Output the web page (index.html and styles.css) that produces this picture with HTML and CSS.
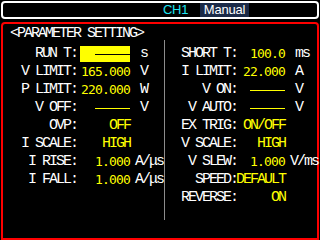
FILE: index.html
```html
<!DOCTYPE html>
<html lang="en">
<head>
  <meta charset="UTF-8" />
  <title>Parameter Setting</title>
  <link rel="stylesheet" href="styles.css">
</head>
<body>

  <div class="topbar">
    <span class="ch">CH1</span>
    <span class="mode">Manual</span>
  </div>

  <div class="panel">
    <div class="title">&lt;PARAMETER SETTING&gt;</div>

    <div class="cols">
      <div class="col left">
        <div class="row">
          <span class="lbl">RUN T:</span>
          <span class="val"><span class="edit"><i class="line"></i></span></span>
          <span class="unit">s</span>
        </div>
        <div class="row">
          <span class="lbl">V LIMIT:</span>
          <span class="val num">165.000</span>
          <span class="unit">V</span>
        </div>
        <div class="row">
          <span class="lbl">P LIMIT:</span>
          <span class="val num">220.000</span>
          <span class="unit">W</span>
        </div>
        <div class="row">
          <span class="lbl">V OFF:</span>
          <span class="val"><i class="dash"></i></span>
          <span class="unit">V</span>
        </div>
        <div class="row">
          <span class="lbl">OVP:</span>
          <span class="val word">OFF</span>
          <span class="unit"></span>
        </div>
        <div class="row">
          <span class="lbl">I SCALE:</span>
          <span class="val word">HIGH</span>
          <span class="unit"></span>
        </div>
        <div class="row">
          <span class="lbl">I RISE:</span>
          <span class="val num">1.000</span>
          <span class="unit wide">A/μs</span>
        </div>
        <div class="row">
          <span class="lbl">I FALL:</span>
          <span class="val num">1.000</span>
          <span class="unit wide">A/μs</span>
        </div>
      </div>

      <div class="divider"></div>

      <div class="col right">
        <div class="row">
          <span class="lbl">SHORT T:</span>
          <span class="val num">100.0</span>
          <span class="unit">ms</span>
        </div>
        <div class="row">
          <span class="lbl">I LIMIT:</span>
          <span class="val num">22.000</span>
          <span class="unit">A</span>
        </div>
        <div class="row">
          <span class="lbl">V ON:</span>
          <span class="val"><i class="dash"></i></span>
          <span class="unit">V</span>
        </div>
        <div class="row">
          <span class="lbl">V AUTO:</span>
          <span class="val"><i class="dash"></i></span>
          <span class="unit">V</span>
        </div>
        <div class="row">
          <span class="lbl">EX TRIG:</span>
          <span class="val word">ON/OFF</span>
          <span class="unit"></span>
        </div>
        <div class="row">
          <span class="lbl">V SCALE:</span>
          <span class="val word">HIGH</span>
          <span class="unit"></span>
        </div>
        <div class="row">
          <span class="lbl">V SLEW:</span>
          <span class="val num">1.000</span>
          <span class="unit wide">V/ms</span>
        </div>
        <div class="row">
          <span class="lbl">SPEED:</span>
          <span class="val word">DEFAULT</span>
          <span class="unit"></span>
        </div>
        <div class="row">
          <span class="lbl">REVERSE:</span>
          <span class="val word">ON</span>
          <span class="unit"></span>
        </div>
      </div>
    </div>
  </div>

</body>
</html>
```

FILE: styles.css
```css
body {
  margin: 0;
  padding: 0;
  width: 320px;
  height: 240px;
  background: #000;
  overflow: hidden;
  font-family: "Liberation Mono", monospace;
  color: #fff;
}

/* top status bar */
.topbar {
  display: flex;
  align-items: stretch;
  margin: 1px 0 0 1px;
  width: 154px;
  height: 14px;
  padding-left: 160px;
  border: 2px solid #fff;
  border-radius: 4px;
  font-family: "Liberation Sans", Arial, sans-serif;
  font-size: 13px;
  line-height: 14px;
}

.ch {
  width: 37px;
  color: #1ee3f0;
  letter-spacing: -0.3px;
}

.mode {
  width: 49px;
  text-align: center;
  background: #1b2a47;
  color: #fff;
  letter-spacing: -0.2px;
}

/* red framed panel */
.panel {
  margin: 3px 0 0 1px;
  width: 314px;
  height: 214px;
  border: 2px solid #ff0000;
  border-radius: 4px 4px 0 0;
}

.title {
  height: 18px;
  line-height: 18px;
  padding: 1px 0 0 7px;
  font-size: 15px;
  letter-spacing: -2px;
}

.cols {
  display: grid;
  grid-template-columns: 161px 1px 1fr;
  margin-top: -3px;
  height: 180px;
}

.col {
  padding-top: 5px;
}

.divider {
  background: #8c8c8c;
}

.row {
  display: grid;
  height: 18px;
  align-items: center;
  font-size: 15px;
  line-height: 18px;
}

.left .row {
  grid-template-columns: 74px 53px 1fr;
}

.right .row {
  grid-template-columns: 72px 48px 1fr;
}

.lbl {
  text-align: right;
  letter-spacing: -2px;
  white-space: nowrap;
}

.val {
  display: flex;
  justify-content: flex-end;
  align-items: center;
  height: 18px;
  color: #ffff00;
  white-space: nowrap;
}

.word {
  letter-spacing: -2px;
}

.num {
  font-family: "DejaVu Sans Mono", monospace;
  font-size: 13px;
  letter-spacing: -0.83px;
}

.unit {
  padding-left: 10px;
  letter-spacing: -2px;
  white-space: nowrap;
}

.unit.wide {
  padding-left: 5px;
}

.dash {
  display: block;
  width: 35px;
  height: 1px;
  background: #ffff00;
}

/* highlighted edit field */
.edit {
  display: flex;
  justify-content: flex-end;
  align-items: center;
  width: 50px;
  height: 16px;
  background: #ffff00;
}

.edit .line {
  display: block;
  width: 35px;
  height: 1px;
  background: #000;
}
```
